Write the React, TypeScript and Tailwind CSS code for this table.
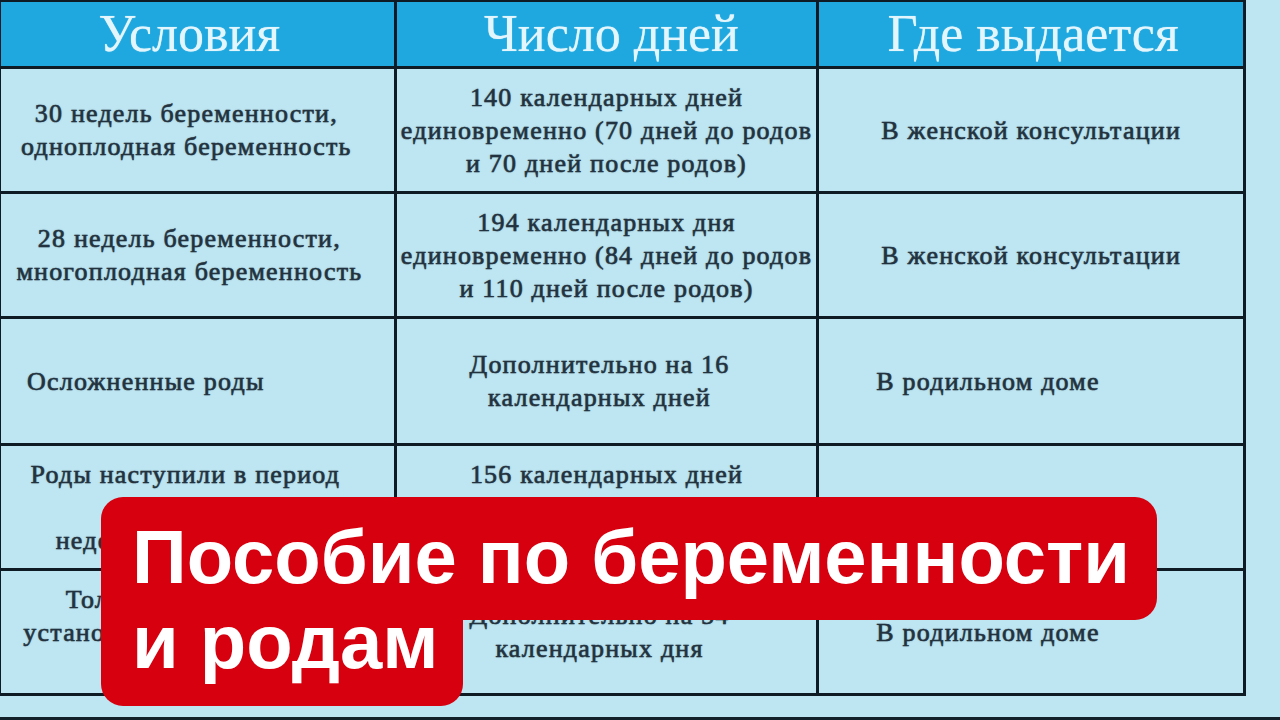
import React from "react";

const serif = { fontFamily: '"Liberation Serif", "Times New Roman", serif' };

type Cell = { lines: string[]; align: "center" | "left"; pad: string };

const rows: { h: string; cells: Cell[] }[] = [
  {
    h: "h-[125px]",
    cells: [
      { lines: ["30 недель беременности,", "одноплодная беременность"], align: "center", pad: "pr-[22px]" },
      { lines: ["140 календарных дней", "единовременно (70 дней до родов", "и 70 дней после родов)"], align: "center", pad: "" },
      { lines: ["В женской консультации"], align: "center", pad: "" },
    ],
  },
  {
    h: "h-[125px]",
    cells: [
      { lines: ["28 недель беременности,", "многоплодная беременность"], align: "center", pad: "pr-[16px]" },
      { lines: ["194 календарных дня", "единовременно (84 дней до родов", "и 110 дней после родов)"], align: "center", pad: "" },
      { lines: ["В женской консультации"], align: "center", pad: "" },
    ],
  },
  {
    h: "h-[127px]",
    cells: [
      { lines: ["Осложненные роды"], align: "left", pad: "pl-[26px]" },
      { lines: ["Дополнительно на 16", "календарных дней"], align: "center", pad: "pr-[14px]" },
      { lines: ["В родильном доме"], align: "left", pad: "pl-[57px]" },
    ],
  },
  {
    h: "h-[125px]",
    cells: [
      { lines: ["Роды наступили в период", "от 22 до 30", "недель беременности"], align: "center", pad: "pr-[24px]" },
      { lines: ["156 календарных дней", "(70 дней до родов", "и 86 дней после родов)"], align: "center", pad: "" },
      { lines: ["В родильном доме"], align: "left", pad: "pl-[57px]" },
    ],
  },
  {
    h: "h-[125px]",
    cells: [
      { lines: ["Только в ходе родов", "установлена многоплодная", "беременность"], align: "center", pad: "pr-[20px]" },
      { lines: ["Дополнительно на 54", "календарных дня"], align: "center", pad: "pr-[14px]" },
      { lines: ["В родильном доме"], align: "left", pad: "pl-[57px]" },
    ],
  },
];

const colW = ["w-[396px]", "w-[423px]", "w-[427px]"];

function BodyCell({ cell, w }: { cell: Cell; w: string }) {
  return (
    <div
      className={`${w} h-full flex flex-col justify-center border-b-[3px] border-r-[3px] border-[#0e1a24] ${
        cell.align === "center" ? "items-center text-center" : "items-start text-left"
      } ${cell.pad}`}
    >
      {cell.lines.map((l, i) => (
        <div
          key={i}
          className="text-[26px] tracking-[1.2px] leading-[33px] text-[#22323e] whitespace-nowrap [-webkit-text-stroke:0.5px_#22323e] [text-shadow:0_0_1.5px_rgba(30,50,65,0.6)]"
          style={serif}
        >
          {l}
        </div>
      ))}
    </div>
  );
}

export default function App() {
  return (
    <div className="relative w-[1280px] h-[720px] overflow-hidden bg-[#bee6f2]">
      <div className="flex flex-col h-[720px] border-b-[3px] border-[#13212b]">
        <div className="flex flex-col w-[1246px] border-t-[2px] border-l-[1px] border-[#0e1a24]">
          {/* header */}
          <div className="flex h-[67px] bg-[#1ea8df]">
            {["Условия", "Число дней", "Где выдается"].map((t, i) => (
              <div
                key={t}
                className={`${colW[i]} h-full flex items-center justify-center border-r-[3px] border-b-[3px] border-[#0e1a24] text-[52px] leading-none text-[#e4f6fd] [text-shadow:0_0_1px_rgba(228,246,253,0.8)] ${
                  i === 0 ? "pr-[16px]" : i === 1 ? "pl-[10px]" : "pl-[4px]"
                }`}
                style={serif}
              >
                {t}
              </div>
            ))}
          </div>
          {rows.map((r, ri) => (
            <div key={ri} className={`flex ${r.h}`}>
              {r.cells.map((c, ci) => (
                <BodyCell key={ci} cell={c} w={colW[ci]} />
              ))}
            </div>
          ))}
        </div>
      </div>

      {/* red caption overlay */}
      <div
        className="absolute left-[101px] top-[497px] flex flex-col items-start text-white font-bold text-[76px]"
        style={{ fontFamily: '"Liberation Sans", Arial, sans-serif' }}
      >
        <div className="w-[1056px] h-[123px] bg-[#d6000f] rounded-t-[22px] rounded-br-[22px] pl-[31px] pt-[38px] leading-[44px] whitespace-nowrap">
          Пособие по беременности
        </div>
        <div className="w-[362px] h-[86px] bg-[#d6000f] rounded-b-[22px] pl-[31px] leading-[44px] whitespace-nowrap">
          и родам
        </div>
      </div>
    </div>
  );
}
